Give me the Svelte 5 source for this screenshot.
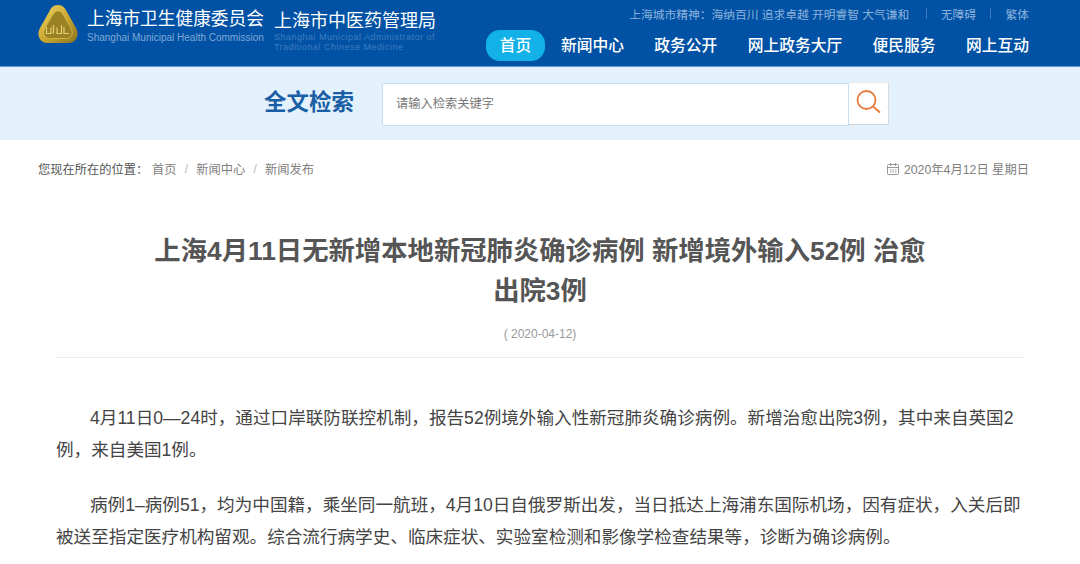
<script>
  const nav = ['新闻中心', '政务公开', '网上政务大厅', '便民服务', '网上互动'];
</script>

<div class="page">
  <header class="header">
    <div class="brand">
      <svg class="emblem" viewBox="0 0 40 40" aria-hidden="true">
        <defs>
          <linearGradient id="gold" x1="0" y1="0" x2="1" y2="1">
            <stop offset="0" stop-color="#f0d765" />
            <stop offset="0.55" stop-color="#c9a52e" />
            <stop offset="1" stop-color="#8a7420" />
          </linearGradient>
        </defs>
        <path d="M20 1C25 1 27 4 29 8L38 24C42 31 38 39 31 39H9C2 39 -2 31 2 24L11 8C13 4 15 1 20 1Z" fill="url(#gold)" />
        <path d="M20 7C23 7 24 9 26 12L33 24C36 30 33 34.500 28.500 34.500H11.500C7 34.500 4 30 7 24L14 12C16 9 17 7 20 7Z" fill="#9a8123" stroke="#d9bd4a" stroke-width="0.800" />
        <path d="M8.500 23V29.500H13V23.500M15.500 21V29.500M19 23.500V29.500H23.500V21M26 23V29.500H31" fill="none" stroke="#e6d070" stroke-width="1.200" />
      </svg>
      <div class="org org-a">
        <div class="org-cn">上海市卫生健康委员会</div>
        <div class="org-en">Shanghai Municipal Health Commission</div>
      </div>
      <div class="org org-b">
        <div class="org-cn">上海市中医药管理局</div>
        <div class="org-en dim">Shanghai Municipal Administrator of<br />Traditional Chinese Medicine</div>
      </div>
    </div>
    <div class="header-right">
      <div class="util">
        <span class="motto">上海城市精神：海纳百川 追求卓越 开明睿智 大气谦和</span>
        <i class="sep"></i>
        <span>无障碍</span>
        <i class="sep"></i>
        <span>繁体</span>
      </div>
      <nav class="nav">
        <a class="home" href="#top">首页</a>
        {#each nav as item}
          <a href="#top">{item}</a>
        {/each}
      </nav>
    </div>
  </header>

  <section class="search">
    <h2>全文检索</h2>
    <div class="field">请输入检索关键字</div>
    <button class="go" aria-label="搜索">
      <svg viewBox="0 0 28 28" width="28" height="28" fill="none" stroke="#e67a3c" stroke-width="1.800" aria-hidden="true">
        <circle cx="11.500" cy="10" r="9" />
        <path d="M18 16.500L25 22.500" />
      </svg>
    </button>
  </section>

  <div class="crumbs">
    <div class="trail">
      <span class="here">您现在所在的位置：</span>
      <span>首页</span><em>/</em><span>新闻中心</span><em>/</em><span>新闻发布</span>
    </div>
    <div class="today">
      <svg viewBox="0 0 12 12" width="12" height="12" fill="none" stroke="#999" stroke-width="1" aria-hidden="true">
        <rect x="0.500" y="1.500" width="11" height="10" rx="1" />
        <path d="M0.500 4.500H11.500M3.500 0V3M8.500 0V3M3 7H4.500M5.500 7H7M8 7H9.500M3 9H4.500M5.500 9H7M8 9H9.500" />
      </svg>
      <span>2020年4月12日 星期日</span>
    </div>
  </div>

  <article class="article">
    <h1>上海4月11日无新增本地新冠肺炎确诊病例 新增境外输入52例 治愈出院3例</h1>
    <div class="stamp">( 2020-04-12)</div>
    <p>4月11日0—24时，通过口岸联防联控机制，报告52例境外输入性新冠肺炎确诊病例。新增治愈出院3例，其中来自英国2例，来自美国1例。</p>
    <p>病例1–病例51，均为中国籍，乘坐同一航班，4月10日自俄罗斯出发，当日抵达上海浦东国际机场，因有症状，入关后即被送至指定医疗机构留观。综合流行病学史、临床症状、实验室检测和影像学检查结果等，诊断为确诊病例。</p>
  </article>
</div>

<style>
  :global(body) {
    margin: 0;
    background: #fff;
    overflow: hidden;
  }
  .page {
    width: 1080px;
    height: 564px;
    overflow: hidden;
    font-family: "Liberation Sans", "Noto Sans CJK SC", sans-serif;
  }
  .header {
    height: 66px;
    border-bottom: 1px solid #5b9bd5;
    background: #0152a5;
    display: flex;
    justify-content: space-between;
    padding: 0 51px 0 38px;
  }
  .brand {
    display: flex;
    align-items: flex-start;
  }
  .emblem {
    width: 40px;
    height: 40px;
    margin-top: 4px;
    flex: none;
  }
  .org {
    margin-top: 9px;
    color: #fff;
  }
  .org-a {
    margin-left: 9px;
  }
  .org-b {
    margin-left: 10px;
    margin-top: 11px;
  }
  .org-cn {
    font-size: 17.700px;
    line-height: 20px;
    white-space: nowrap;
  }
  .org-b .org-cn {
    font-size: 18px;
  }
  .org-en {
    margin-top: 4px;
    font-size: 10px;
    line-height: 10px;
    color: #7fa8d6;
    white-space: nowrap;
  }
  .org-en.dim {
    margin-top: 1px;
    color: #3f7cbe;
    font-size: 9px;
    letter-spacing: 0.500px;
  }
  .header-right {
    display: flex;
    flex-direction: column;
    align-items: flex-end;
  }
  .util {
    margin-top: 5px;
    height: 16px;
    display: flex;
    align-items: center;
    font-size: 11.750px;
    color: #8cb2dc;
    white-space: nowrap;
  }
  .motto {
    margin-right: 2px;
  }
  .sep {
    width: 1px;
    height: 11px;
    margin: 0 14.250px;
    background: #3f7cbd;
  }
  .nav {
    margin-top: 9px;
    display: flex;
    align-items: center;
    gap: 30.400px;
  }
  .nav a {
    color: #fff;
    font-size: 15.750px;
    line-height: 31px;
    text-decoration: none;
    font-weight: 500;
    white-space: nowrap;
  }
  .nav a.home {
    width: 59px;
    margin-right: -14.400px;
    text-align: center;
    border-radius: 14px;
    background: #12b2e8;
  }
  .search {
    height: 73px;
    box-sizing: border-box;
    padding: 15px 0 0 264px;
    background: #e3f1fc;
    display: flex;
    align-items: flex-start;
  }
  .search h2 {
    margin: 6px 28px 0 0;
    width: 90px;
    font-size: 22.500px;
    line-height: 30px;
    font-weight: 700;
    color: #1a5ea6;
    white-space: nowrap;
  }
  .field {
    width: 452px;
    padding-left: 13px;
    line-height: 41px;
    height: 41px;
    margin-top: 1px;
    background: #fff;
    border: 1px solid #c6dff3;
    border-radius: 2px 0 0 2px;
    font-size: 12.250px;
    color: #777;
  }
  .go {
    width: 40px;
    height: 43px;
    padding: 0;
    display: flex;
    align-items: center;
    justify-content: center;
    background: #fff;
    border: 0;
    border-top: 1px solid #e6e9ec;
    border-bottom: 1px solid #d3d3d3;
    border-right: 1px solid #dcdcdc;
    box-sizing: border-box;
  }
  .crumbs {
    height: 57px;
    padding: 0 51px 0 38px;
    display: flex;
    align-items: center;
    justify-content: space-between;
    font-size: 12.250px;
    color: #808080;
  }
  .trail {
    display: flex;
    align-items: center;
  }
  .here {
    color: #555;
    margin-right: 3.750px;
  }
  .trail em {
    font-style: normal;
    color: #bbb;
    margin: 0 8.200px;
  }
  .today {
    display: flex;
    align-items: center;
    gap: 5px;
    font-size: 12.300px;
  }
  .article {
    padding: 0 56px;
    color: #444;
  }
  .article h1 {
    width: 785px;
    margin: 34px auto 0;
    font-size: 26.350px;
    line-height: 40px;
    font-weight: 700;
    text-align: center;
    color: #555;
  }
  .stamp {
    margin-top: 15px;
    padding-bottom: 15px;
    border-bottom: 1px solid #ececec;
    text-align: center;
    font-size: 12px;
    line-height: 16px;
    color: #999;
  }
  .article p {
    margin: 44px 0 0;
    font-size: 17.600px;
    line-height: 32px;
    text-indent: 34px;
  }
  .article p + p {
    margin-top: 23px;
  }
</style>
